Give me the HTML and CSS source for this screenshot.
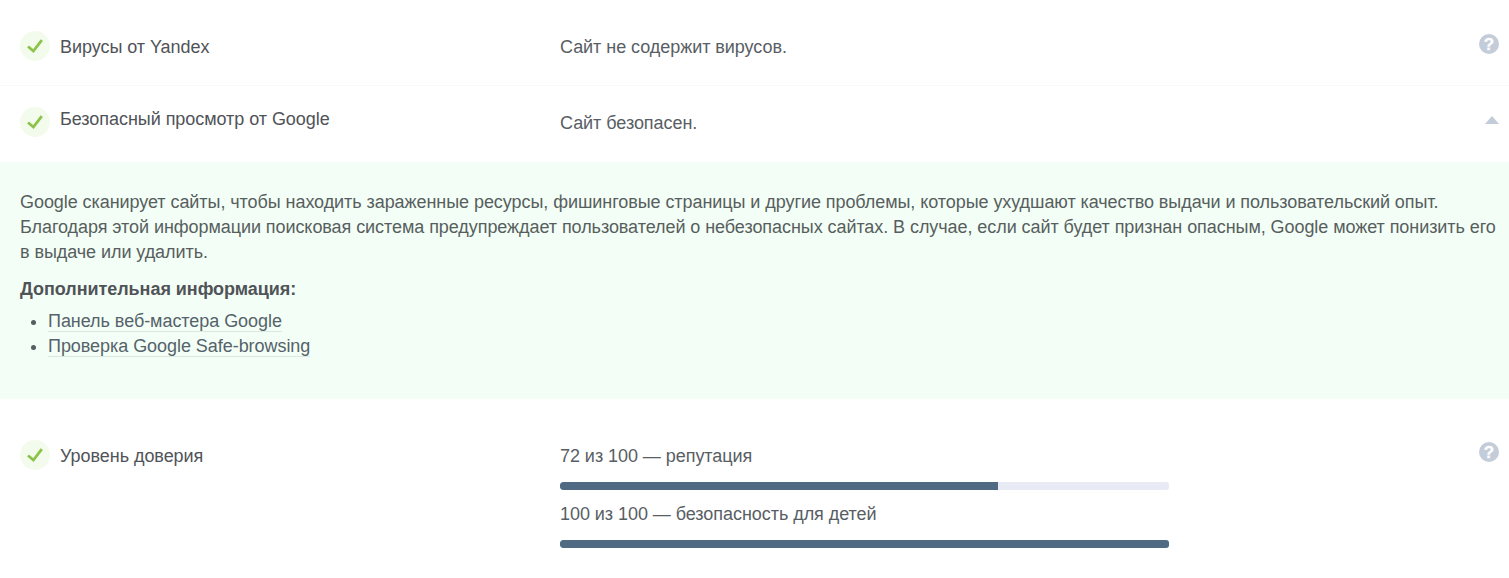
FILE: index.html
```html
<!DOCTYPE html>
<html lang="ru">
<head>
<meta charset="utf-8">
<title>Безопасность сайта</title>
<link rel="stylesheet" href="styles.css">
</head>
<body>
<div class="row row-first">
  <div class="label"><span class="check"><svg viewBox="0 0 18 16" width="18" height="16"><path d="M2 8.5 L7.4 13 L15.8 2.2" fill="none" stroke="#8cc44a" stroke-width="2.8"/></svg></span><span class="label-text">Вирусы от Yandex</span></div>
  <div class="value">Сайт не содержит вирусов.</div>
  <div class="aside"><svg class="help" viewBox="0 0 20 20" width="20" height="20"><circle cx="10" cy="10" r="10" fill="#c3ccd9"/><text x="10" y="16" text-anchor="middle" class="help-mark">?</text></svg></div>
</div>
<div class="row row-second">
  <div class="label"><span class="check"><svg viewBox="0 0 18 16" width="18" height="16"><path d="M2 8.5 L7.4 13 L15.8 2.2" fill="none" stroke="#8cc44a" stroke-width="2.8"/></svg></span><span class="label-text label-text-up">Безопасный просмотр от Google</span></div>
  <div class="value value-second">Сайт безопасен.</div>
  <div class="aside aside-arrow"><span class="arrow"></span></div>
</div>
<div class="panel">
  <p class="panel-text">Google сканирует сайты, чтобы находить зараженные ресурсы, фишинговые страницы и другие проблемы, которые ухудшают качество выдачи и пользовательский опыт. Благодаря этой информации поисковая система предупреждает пользователей о небезопасных сайтах. В случае, если сайт будет признан опасным, Google может понизить его в выдаче или удалить.</p>
  <p class="panel-head">Дополнительная информация:</p>
  <ul class="links">
    <li><a href="#">Панель веб-мастера Google</a></li>
    <li><a href="#">Проверка Google Safe-browsing</a></li>
  </ul>
</div>
<div class="row row-third">
  <div class="label"><span class="check"><svg viewBox="0 0 18 16" width="18" height="16"><path d="M2 8.5 L7.4 13 L15.8 2.2" fill="none" stroke="#8cc44a" stroke-width="2.8"/></svg></span><span class="label-text">Уровень доверия</span></div>
  <div class="value">
    <div class="score">72 из 100 — репутация</div>
    <div class="bar"><div class="fill" style="width:72%"></div></div>
    <div class="score">100 из 100 — безопасность для детей</div>
    <div class="bar"><div class="fill" style="width:100%"></div></div>
  </div>
  <div class="aside"><svg class="help" viewBox="0 0 20 20" width="20" height="20"><circle cx="10" cy="10" r="10" fill="#c3ccd9"/><text x="10" y="16" text-anchor="middle" class="help-mark">?</text></svg></div>
</div>
</body>
</html>
```
FILE: styles.css
```css
* { box-sizing: border-box; }
html, body { margin: 0; padding: 0; }
body {
  background: #fff;
  color: #505358;
  font-family: "Liberation Sans", Arial, sans-serif;
  font-size: 18px;
  letter-spacing: -0.05px;
  line-height: 25px;
  overflow: hidden;
  height: 578px;
}
.row {
  display: grid;
  grid-template-columns: 540px 609px 1fr;
  padding: 0 10px 0 20px;
}
.row-first { height: 86px; padding-top: 31px; border-bottom: 1px solid #f8f8f8; }
.row-second { height: 76px; padding-top: 21px; }
.row-third { padding-top: 41px; }
.label { display: flex; align-items: flex-start; gap: 10px; }
.check {
  flex: none;
  width: 30px;
  height: 30px;
  border-radius: 50%;
  background: #f3fbec;
  display: flex;
  align-items: center;
  justify-content: center;
}
.label-text { margin-top: 4px; }
.row-second .label-text { margin-top: 0; }
.value { padding-top: 4px; color: #585e64; }
.aside { display: flex; justify-content: flex-end; align-items: flex-start; }
.row-first .aside { padding-top: 3px; }
.row-third .aside { padding-top: 2px; }
.help-mark { font: bold 17px "Liberation Sans", Arial, sans-serif; fill: #fff; stroke: #fff; stroke-width: 0.3px; }
.aside-arrow { padding-top: 9px; }
.arrow {
  width: 0; height: 0;
  border-left: 7px solid transparent;
  border-right: 7px solid transparent;
  border-bottom: 8px solid #c3ccd9;
}
.panel {
  height: 237px;
  background: #f3fff6;
  padding: 28px 12px 0 20px;
  color: #585e60;
}
.panel-text { margin: 0; letter-spacing: -0.065px; }
.panel-head { margin: 12px 0 0; font-weight: bold; color: #505358; }
.links { margin: 7px 0 0; padding: 0 0 0 28px; }
.links a {
  color: #56626b;
  text-decoration: none;
  border-bottom: 1px solid #dbe8e2;
}
.score { height: 25px; }
.bar {
  height: 8px;
  margin: 13px 0 12px;
  border-radius: 3px;
  background: #e8ebf5;
  overflow: hidden;
}
.fill { height: 100%; background: #4f6a82; border-radius: 3px 0 0 3px; }
```
